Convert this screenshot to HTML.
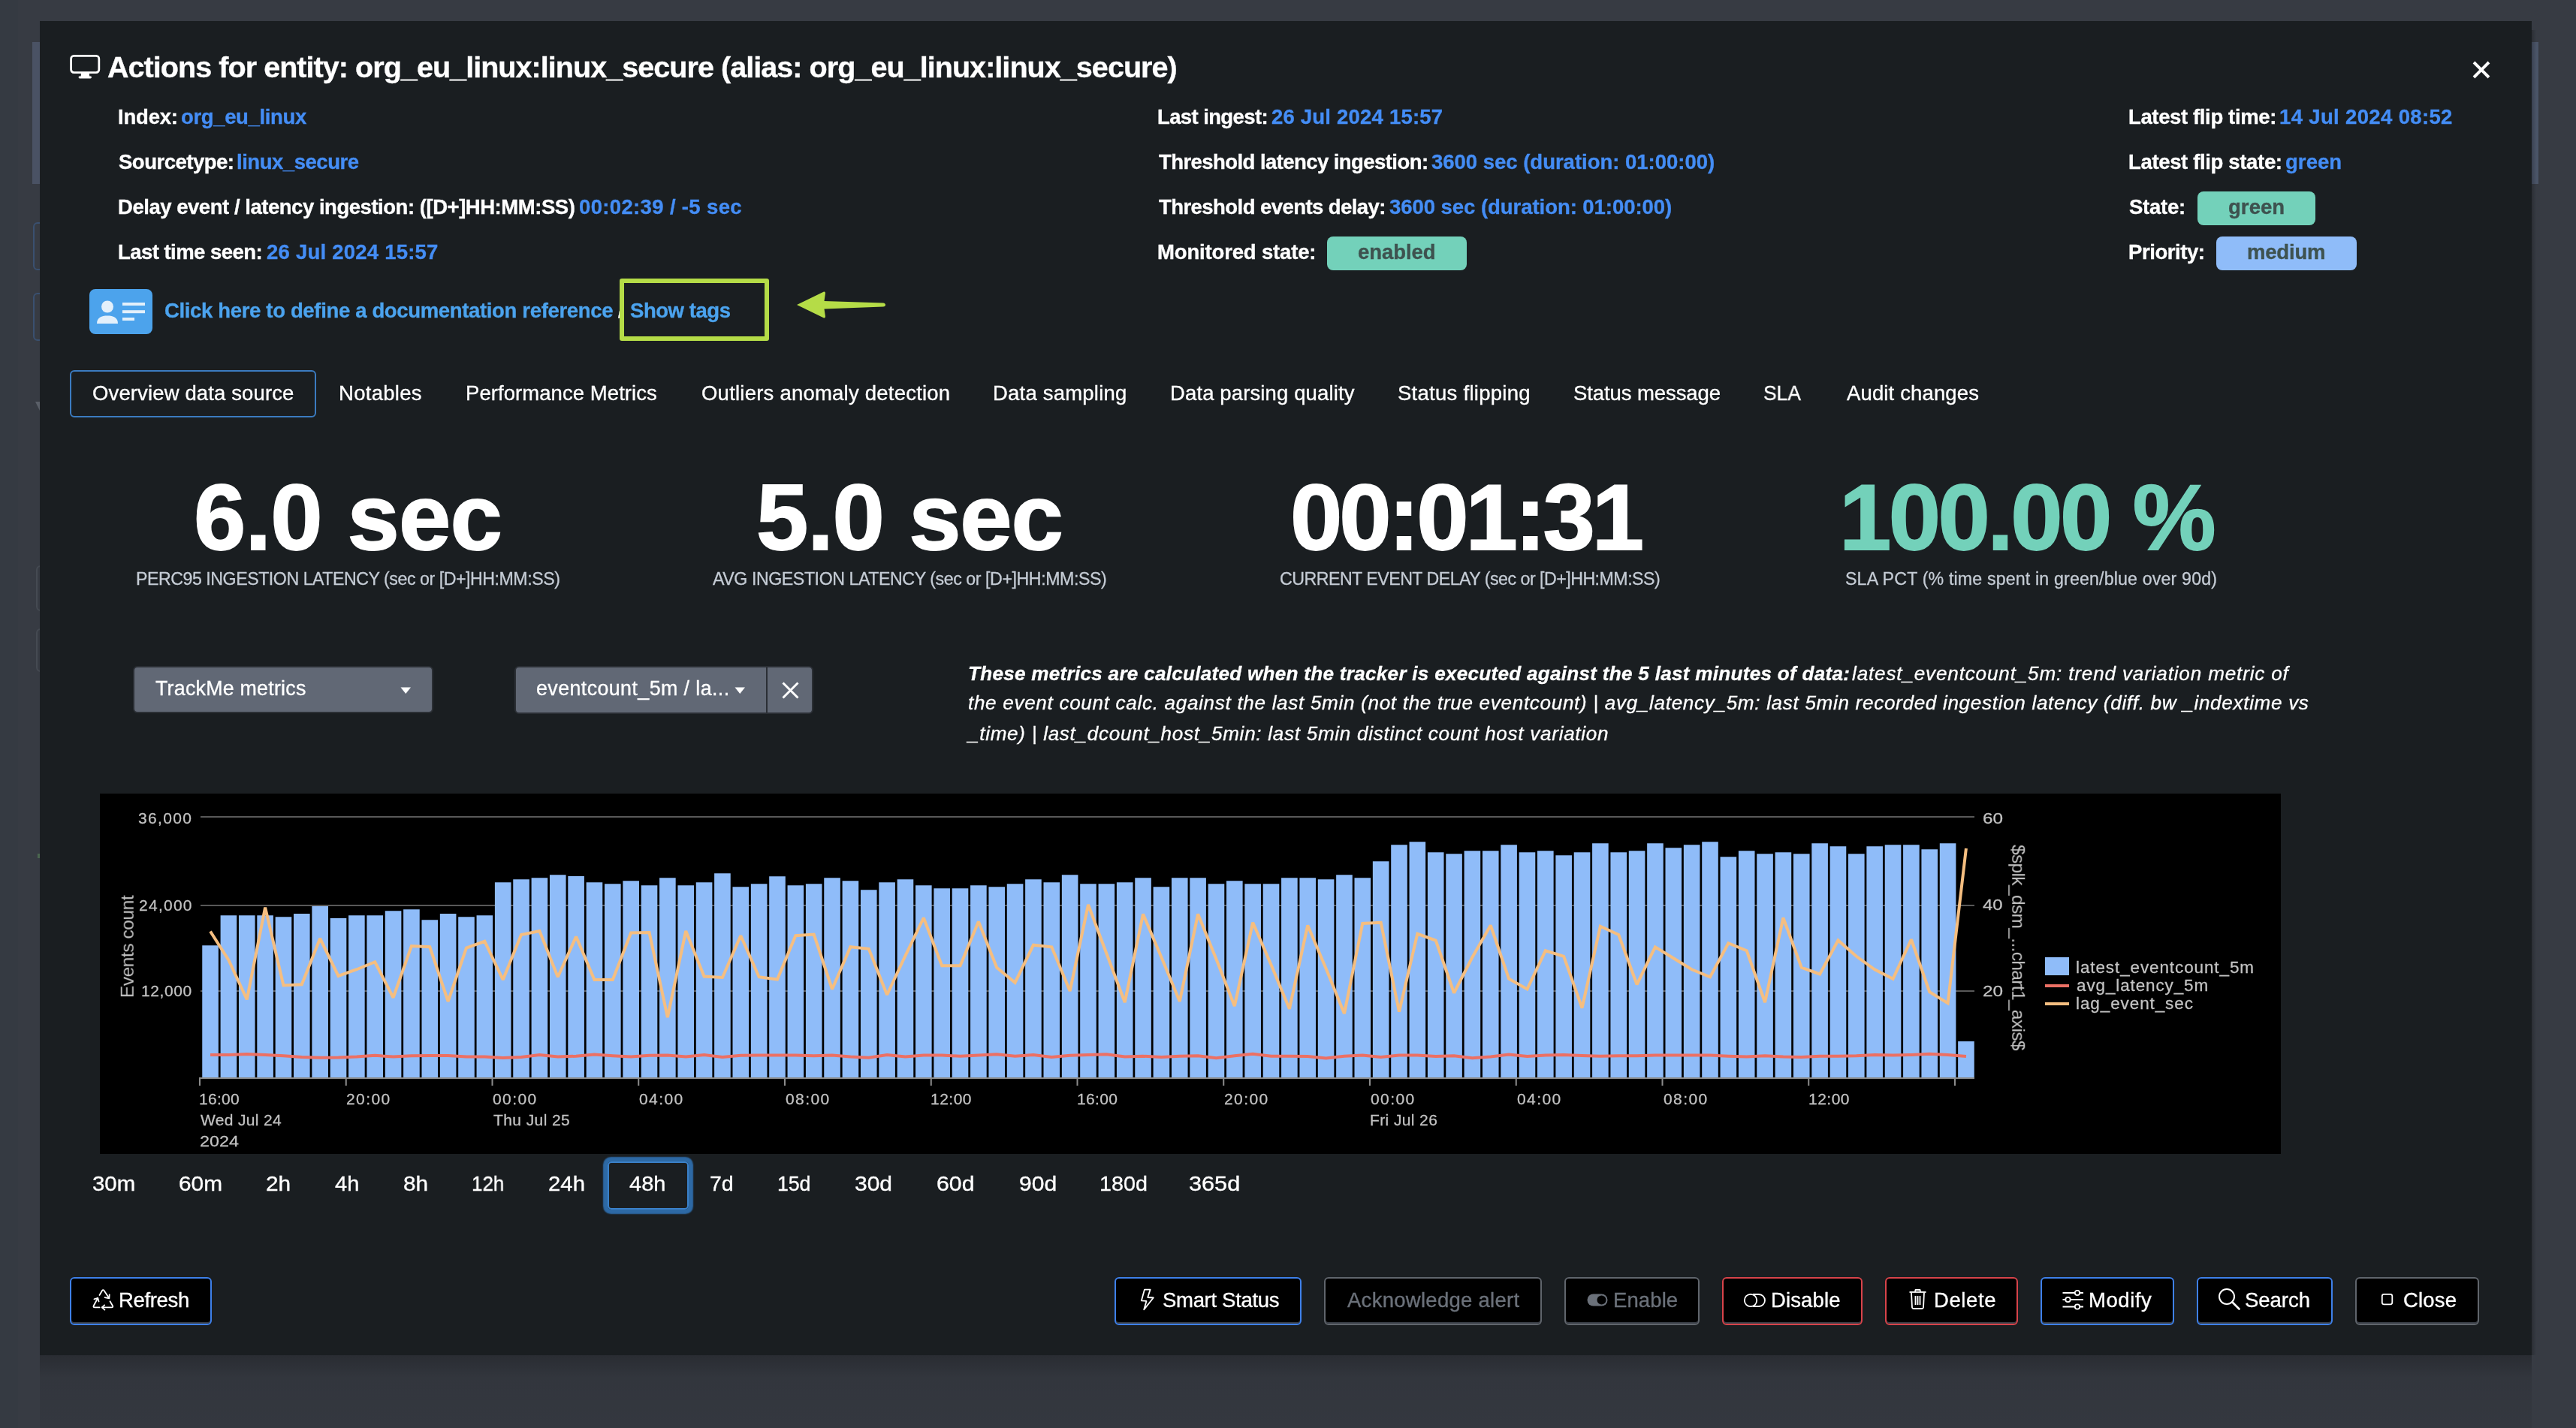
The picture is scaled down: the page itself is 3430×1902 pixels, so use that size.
<!DOCTYPE html><html><head><meta charset="utf-8"><title>TrackMe entity actions</title><style>
html,body{margin:0;padding:0;}body{width:3430px;height:1902px;overflow:hidden;position:relative;background:#373b43;font-family:"Liberation Sans",sans-serif;}
.t{position:absolute;white-space:nowrap;font-family:"Liberation Sans",sans-serif;will-change:transform;}
svg{position:absolute;overflow:visible}
</style></head><body>
<div style="position:absolute;left:0px;top:0px;width:24px;height:1902px;background:#353a42"></div>
<div style="position:absolute;left:43px;top:56px;width:10px;height:189px;background:#4a5264"></div>
<div style="position:absolute;left:44px;top:296px;width:16px;height:64px;border:2px solid #3a5070;border-radius:6px;box-sizing:border-box"></div>
<div style="position:absolute;left:44px;top:390px;width:16px;height:64px;border:2px solid #3a5070;border-radius:6px;box-sizing:border-box"></div>
<div style="position:absolute;left:48px;top:753px;width:12px;height:61px;border:2px solid #454a52;border-radius:6px;box-sizing:border-box"></div>
<div style="position:absolute;left:48px;top:837px;width:12px;height:58px;border:2px solid #454a52;border-radius:6px;box-sizing:border-box"></div>
<div style="position:absolute;left:50px;top:1137px;width:3px;height:6px;background:#4b6650"></div>
<svg style="left:47px;top:535px" width="7" height="14" viewBox="0 0 7 14"><path d="M0 0 L7 0 L7 14 Z" fill="#5a5f68"/></svg>
<div style="position:absolute;left:3371px;top:56px;width:9px;height:189px;background:#4a5467"></div>
<div style="position:absolute;left:53px;top:1805px;width:3318px;height:97px;background:linear-gradient(rgba(0,0,0,0.25),rgba(0,0,0,0.09) 30px,rgba(0,0,0,0.06) 97px)"></div>
<div style="position:absolute;left:3371px;top:40px;width:6px;height:1765px;background:linear-gradient(90deg,rgba(0,0,0,0.22),rgba(0,0,0,0))"></div>
<div style="position:absolute;left:53px;top:28px;width:3318px;height:1777px;background:#1a1e21"></div>
<svg style="left:93px;top:73px" width="42" height="33" viewBox="0 0 42 33"><rect x="1.6" y="1.4" width="37.2" height="22.2" rx="3.8" ry="3.8" fill="none" stroke="#fff" stroke-width="2.8"/><path d="M15 24.5 L25.8 24.5 L26.2 29 L14.6 29 Z" fill="#fff"/><rect x="11.6" y="28.6" width="17.3" height="2.8" rx="1.4" fill="#fff"/></svg>
<svg style="left:3291px;top:79.5px" width="26" height="26" viewBox="0 0 26 26"><path d="M3 3 L23 23 M23 3 L3 23" stroke="#fff" stroke-width="3.9" stroke-linecap="butt"/></svg>
<div style="position:absolute;left:1767px;top:315px;width:186px;height:45px;background:#73d1ba;border-radius:8px"></div>
<div style="position:absolute;left:2926px;top:255px;width:157px;height:45px;background:#73d1ba;border-radius:8px"></div>
<div style="position:absolute;left:2951px;top:315px;width:187px;height:45px;background:#8fbcf9;border-radius:8px"></div>
<svg style="left:119px;top:384px" width="84" height="61" viewBox="0 0 84 61"><rect x="0" y="1" width="84" height="60" rx="8" fill="#4ca3ec"/><circle cx="24" cy="24.5" r="8" fill="#e3f0fb"/><path d="M10 47 C10 39 16 36.5 24 36.5 C32 36.5 38 39 38 47 Z" fill="#e3f0fb"/><rect x="44" y="19" width="30" height="4" fill="#e3f0fb"/><rect x="44" y="29.2" width="30" height="4" fill="#e3f0fb"/><rect x="44" y="39" width="16" height="4" fill="#e3f0fb"/></svg>
<div style="position:absolute;left:93px;top:493px;width:328px;height:63px;border:2px solid #3b7bc0;border-radius:6px;box-sizing:border-box"></div>
<div style="position:absolute;left:177px;top:887px;width:400px;height:63px;background:#616875;border:2px solid #2b2f35;border-radius:6px;box-sizing:border-box"></div>
<svg style="left:533px;top:915px" width="15" height="10" viewBox="0 0 15 10"><path d="M0.5 0.5 L14 0.5 L7.25 9 Z" fill="#fff"/></svg>
<div style="position:absolute;left:685px;top:887px;width:398px;height:64px;background:#616875;border:2px solid #2b2f35;border-radius:6px;box-sizing:border-box"></div>
<div style="position:absolute;left:1019.5px;top:889px;width:2.5px;height:60px;background:#2b2f35"></div>
<svg style="left:978px;top:915px" width="15" height="10" viewBox="0 0 15 10"><path d="M0.5 0.5 L14 0.5 L7.25 9 Z" fill="#fff"/></svg>
<svg style="left:1040px;top:907px" width="25" height="25" viewBox="0 0 25 25"><path d="M2.5 2.5 L22.5 22.5 M22.5 2.5 L2.5 22.5" stroke="#fff" stroke-width="3"/></svg>
<div style="position:absolute;left:133px;top:1057px;width:2904px;height:480px;background:#000"></div>
<svg style="left:0;top:0" width="3430" height="1902" viewBox="0 0 3430 1902"><rect x="267" y="1087" width="2362" height="2" fill="#585858"/><rect x="267" y="1205" width="2362" height="2" fill="#585858"/><rect x="267" y="1319" width="2362" height="2" fill="#585858"/><rect x="269.25" y="1259.25" width="21.6" height="175.75" fill="#8fbcf9"/><rect x="293.60" y="1219.25" width="21.6" height="215.75" fill="#8fbcf9"/><rect x="317.96" y="1219.25" width="21.6" height="215.75" fill="#8fbcf9"/><rect x="342.31" y="1219.25" width="21.6" height="215.75" fill="#8fbcf9"/><rect x="366.66" y="1221.25" width="21.6" height="213.75" fill="#8fbcf9"/><rect x="391.01" y="1217.00" width="21.6" height="218.00" fill="#8fbcf9"/><rect x="415.37" y="1207.00" width="21.6" height="228.00" fill="#8fbcf9"/><rect x="439.72" y="1223.00" width="21.6" height="212.00" fill="#8fbcf9"/><rect x="464.07" y="1219.25" width="21.6" height="215.75" fill="#8fbcf9"/><rect x="488.43" y="1219.25" width="21.6" height="215.75" fill="#8fbcf9"/><rect x="512.78" y="1213.25" width="21.6" height="221.75" fill="#8fbcf9"/><rect x="537.13" y="1211.25" width="21.6" height="223.75" fill="#8fbcf9"/><rect x="561.49" y="1225.25" width="21.6" height="209.75" fill="#8fbcf9"/><rect x="585.84" y="1217.00" width="21.6" height="218.00" fill="#8fbcf9"/><rect x="610.19" y="1221.25" width="21.6" height="213.75" fill="#8fbcf9"/><rect x="634.55" y="1219.25" width="21.6" height="215.75" fill="#8fbcf9"/><rect x="658.90" y="1175.25" width="21.6" height="259.75" fill="#8fbcf9"/><rect x="683.25" y="1171.25" width="21.6" height="263.75" fill="#8fbcf9"/><rect x="707.60" y="1169.25" width="21.6" height="265.75" fill="#8fbcf9"/><rect x="731.96" y="1165.25" width="21.6" height="269.75" fill="#8fbcf9"/><rect x="756.31" y="1167.00" width="21.6" height="268.00" fill="#8fbcf9"/><rect x="780.66" y="1175.25" width="21.6" height="259.75" fill="#8fbcf9"/><rect x="805.02" y="1177.25" width="21.6" height="257.75" fill="#8fbcf9"/><rect x="829.37" y="1173.25" width="21.6" height="261.75" fill="#8fbcf9"/><rect x="853.72" y="1179.25" width="21.6" height="255.75" fill="#8fbcf9"/><rect x="878.08" y="1169.25" width="21.6" height="265.75" fill="#8fbcf9"/><rect x="902.43" y="1179.25" width="21.6" height="255.75" fill="#8fbcf9"/><rect x="926.78" y="1175.25" width="21.6" height="259.75" fill="#8fbcf9"/><rect x="951.13" y="1163.25" width="21.6" height="271.75" fill="#8fbcf9"/><rect x="975.49" y="1181.25" width="21.6" height="253.75" fill="#8fbcf9"/><rect x="999.84" y="1177.25" width="21.6" height="257.75" fill="#8fbcf9"/><rect x="1024.19" y="1167.25" width="21.6" height="267.75" fill="#8fbcf9"/><rect x="1048.55" y="1179.25" width="21.6" height="255.75" fill="#8fbcf9"/><rect x="1072.90" y="1177.25" width="21.6" height="257.75" fill="#8fbcf9"/><rect x="1097.25" y="1169.25" width="21.6" height="265.75" fill="#8fbcf9"/><rect x="1121.61" y="1173.25" width="21.6" height="261.75" fill="#8fbcf9"/><rect x="1145.96" y="1185.25" width="21.6" height="249.75" fill="#8fbcf9"/><rect x="1170.31" y="1175.25" width="21.6" height="259.75" fill="#8fbcf9"/><rect x="1194.66" y="1171.25" width="21.6" height="263.75" fill="#8fbcf9"/><rect x="1219.02" y="1179.25" width="21.6" height="255.75" fill="#8fbcf9"/><rect x="1243.37" y="1183.25" width="21.6" height="251.75" fill="#8fbcf9"/><rect x="1267.72" y="1183.25" width="21.6" height="251.75" fill="#8fbcf9"/><rect x="1292.08" y="1179.25" width="21.6" height="255.75" fill="#8fbcf9"/><rect x="1316.43" y="1181.25" width="21.6" height="253.75" fill="#8fbcf9"/><rect x="1340.78" y="1177.25" width="21.6" height="257.75" fill="#8fbcf9"/><rect x="1365.13" y="1171.25" width="21.6" height="263.75" fill="#8fbcf9"/><rect x="1389.49" y="1175.25" width="21.6" height="259.75" fill="#8fbcf9"/><rect x="1413.84" y="1165.25" width="21.6" height="269.75" fill="#8fbcf9"/><rect x="1438.19" y="1177.25" width="21.6" height="257.75" fill="#8fbcf9"/><rect x="1462.55" y="1177.25" width="21.6" height="257.75" fill="#8fbcf9"/><rect x="1486.90" y="1175.25" width="21.6" height="259.75" fill="#8fbcf9"/><rect x="1511.25" y="1169.25" width="21.6" height="265.75" fill="#8fbcf9"/><rect x="1535.61" y="1181.25" width="21.6" height="253.75" fill="#8fbcf9"/><rect x="1559.96" y="1169.25" width="21.6" height="265.75" fill="#8fbcf9"/><rect x="1584.31" y="1169.25" width="21.6" height="265.75" fill="#8fbcf9"/><rect x="1608.67" y="1177.25" width="21.6" height="257.75" fill="#8fbcf9"/><rect x="1633.02" y="1173.25" width="21.6" height="261.75" fill="#8fbcf9"/><rect x="1657.37" y="1177.25" width="21.6" height="257.75" fill="#8fbcf9"/><rect x="1681.72" y="1177.25" width="21.6" height="257.75" fill="#8fbcf9"/><rect x="1706.08" y="1169.25" width="21.6" height="265.75" fill="#8fbcf9"/><rect x="1730.43" y="1169.25" width="21.6" height="265.75" fill="#8fbcf9"/><rect x="1754.78" y="1171.25" width="21.6" height="263.75" fill="#8fbcf9"/><rect x="1779.14" y="1165.25" width="21.6" height="269.75" fill="#8fbcf9"/><rect x="1803.49" y="1169.25" width="21.6" height="265.75" fill="#8fbcf9"/><rect x="1827.84" y="1147.25" width="21.6" height="287.75" fill="#8fbcf9"/><rect x="1852.20" y="1125.25" width="21.6" height="309.75" fill="#8fbcf9"/><rect x="1876.55" y="1121.25" width="21.6" height="313.75" fill="#8fbcf9"/><rect x="1900.90" y="1135.25" width="21.6" height="299.75" fill="#8fbcf9"/><rect x="1925.25" y="1137.25" width="21.6" height="297.75" fill="#8fbcf9"/><rect x="1949.61" y="1133.25" width="21.6" height="301.75" fill="#8fbcf9"/><rect x="1973.96" y="1133.25" width="21.6" height="301.75" fill="#8fbcf9"/><rect x="1998.31" y="1125.25" width="21.6" height="309.75" fill="#8fbcf9"/><rect x="2022.67" y="1135.25" width="21.6" height="299.75" fill="#8fbcf9"/><rect x="2047.02" y="1133.25" width="21.6" height="301.75" fill="#8fbcf9"/><rect x="2071.37" y="1139.25" width="21.6" height="295.75" fill="#8fbcf9"/><rect x="2095.73" y="1135.25" width="21.6" height="299.75" fill="#8fbcf9"/><rect x="2120.08" y="1123.25" width="21.6" height="311.75" fill="#8fbcf9"/><rect x="2144.43" y="1135.25" width="21.6" height="299.75" fill="#8fbcf9"/><rect x="2168.78" y="1133.25" width="21.6" height="301.75" fill="#8fbcf9"/><rect x="2193.14" y="1123.25" width="21.6" height="311.75" fill="#8fbcf9"/><rect x="2217.49" y="1129.25" width="21.6" height="305.75" fill="#8fbcf9"/><rect x="2241.84" y="1125.25" width="21.6" height="309.75" fill="#8fbcf9"/><rect x="2266.20" y="1121.25" width="21.6" height="313.75" fill="#8fbcf9"/><rect x="2290.55" y="1141.25" width="21.6" height="293.75" fill="#8fbcf9"/><rect x="2314.90" y="1133.25" width="21.6" height="301.75" fill="#8fbcf9"/><rect x="2339.26" y="1137.25" width="21.6" height="297.75" fill="#8fbcf9"/><rect x="2363.61" y="1135.25" width="21.6" height="299.75" fill="#8fbcf9"/><rect x="2387.96" y="1137.25" width="21.6" height="297.75" fill="#8fbcf9"/><rect x="2412.31" y="1123.25" width="21.6" height="311.75" fill="#8fbcf9"/><rect x="2436.67" y="1127.25" width="21.6" height="307.75" fill="#8fbcf9"/><rect x="2461.02" y="1137.25" width="21.6" height="297.75" fill="#8fbcf9"/><rect x="2485.37" y="1127.25" width="21.6" height="307.75" fill="#8fbcf9"/><rect x="2509.73" y="1125.25" width="21.6" height="309.75" fill="#8fbcf9"/><rect x="2534.08" y="1125.25" width="21.6" height="309.75" fill="#8fbcf9"/><rect x="2558.43" y="1131.25" width="21.6" height="303.75" fill="#8fbcf9"/><rect x="2582.79" y="1123.25" width="21.6" height="311.75" fill="#8fbcf9"/><rect x="2607.14" y="1387.00" width="21.6" height="48.00" fill="#8fbcf9"/><rect x="265" y="1435" width="2364" height="2" fill="#8c8c8c"/><rect x="265.00" y="1435" width="2" height="11" fill="#8c8c8c"/><rect x="459.75" y="1435" width="2" height="11" fill="#8c8c8c"/><rect x="654.50" y="1435" width="2" height="11" fill="#8c8c8c"/><rect x="849.25" y="1435" width="2" height="11" fill="#8c8c8c"/><rect x="1044.00" y="1435" width="2" height="11" fill="#8c8c8c"/><rect x="1238.75" y="1435" width="2" height="11" fill="#8c8c8c"/><rect x="1433.50" y="1435" width="2" height="11" fill="#8c8c8c"/><rect x="1628.25" y="1435" width="2" height="11" fill="#8c8c8c"/><rect x="1823.00" y="1435" width="2" height="11" fill="#8c8c8c"/><rect x="2017.75" y="1435" width="2" height="11" fill="#8c8c8c"/><rect x="2212.50" y="1435" width="2" height="11" fill="#8c8c8c"/><rect x="2407.25" y="1435" width="2" height="11" fill="#8c8c8c"/><rect x="2602.00" y="1435" width="2" height="11" fill="#8c8c8c"/><polyline points="280.05,1405.00 304.40,1405.00 328.76,1404.00 353.11,1405.00 377.46,1406.25 401.81,1408.00 426.17,1408.75 450.52,1408.50 474.87,1407.50 499.23,1405.75 523.58,1407.50 547.93,1406.25 572.29,1406.00 596.64,1406.00 620.99,1407.50 645.35,1407.50 669.70,1409.00 694.05,1408.00 718.40,1405.00 742.76,1407.50 767.11,1406.75 791.46,1404.50 815.82,1406.25 840.17,1407.50 864.52,1405.75 888.88,1405.50 913.23,1407.50 937.58,1405.00 961.93,1408.00 986.29,1405.75 1010.64,1405.50 1034.99,1405.50 1059.35,1405.50 1083.70,1406.25 1108.05,1405.50 1132.40,1407.50 1156.76,1408.75 1181.11,1405.00 1205.46,1407.50 1229.82,1405.50 1254.17,1405.50 1278.52,1406.75 1302.88,1405.50 1327.23,1404.25 1351.58,1406.75 1375.93,1405.00 1400.29,1408.00 1424.64,1405.75 1448.99,1405.00 1473.35,1404.25 1497.70,1407.50 1522.05,1406.75 1546.41,1408.00 1570.76,1406.75 1595.11,1406.25 1619.47,1409.25 1643.82,1406.25 1668.17,1403.75 1692.52,1406.75 1716.88,1406.75 1741.23,1407.00 1765.58,1409.50 1789.94,1406.75 1814.29,1405.50 1838.64,1408.00 1863.00,1405.50 1887.35,1405.50 1911.70,1407.00 1936.05,1406.25 1960.41,1409.25 1984.76,1407.50 2009.11,1404.50 2033.47,1407.00 2057.82,1405.50 2082.17,1405.00 2106.53,1406.00 2130.88,1406.75 2155.23,1406.25 2179.58,1406.25 2203.94,1405.50 2228.29,1405.50 2252.64,1405.50 2277.00,1405.50 2301.35,1406.75 2325.70,1407.50 2350.06,1406.25 2374.41,1407.50 2398.76,1408.00 2423.11,1406.75 2447.47,1406.75 2471.82,1406.25 2496.17,1405.00 2520.53,1405.50 2544.88,1405.00 2569.23,1403.75 2593.59,1405.00 2617.94,1407.00" fill="none" stroke="#ec7064" stroke-width="4" stroke-linejoin="miter" stroke-miterlimit="2"/><polyline points="280.05,1240.50 304.40,1278.75 328.76,1331.25 353.11,1208.75 377.46,1312.50 401.81,1311.25 426.17,1250.00 450.52,1300.00 474.87,1291.25 499.23,1281.25 523.58,1328.75 547.93,1260.00 572.29,1261.25 596.64,1333.75 620.99,1262.50 645.35,1253.75 669.70,1305.00 694.05,1245.00 718.40,1240.00 742.76,1301.25 767.11,1247.50 791.46,1305.00 815.82,1305.00 840.17,1242.50 864.52,1242.00 888.88,1355.00 913.23,1240.00 937.58,1300.50 961.93,1302.00 986.29,1246.25 1010.64,1301.25 1034.99,1304.50 1059.35,1246.25 1083.70,1244.50 1108.05,1317.50 1132.40,1261.25 1156.76,1263.75 1181.11,1325.00 1205.46,1273.00 1229.82,1222.50 1254.17,1286.25 1278.52,1286.25 1302.88,1227.50 1327.23,1288.75 1351.58,1308.75 1375.93,1258.75 1400.29,1261.25 1424.64,1320.00 1448.99,1205.00 1473.35,1270.00 1497.70,1335.00 1522.05,1217.50 1546.41,1275.00 1570.76,1333.75 1595.11,1217.50 1619.47,1277.50 1643.82,1340.00 1668.17,1228.75 1692.52,1285.00 1716.88,1343.75 1741.23,1232.50 1765.58,1290.00 1789.94,1350.00 1814.29,1230.00 1838.64,1228.75 1863.00,1347.50 1887.35,1243.75 1911.70,1252.50 1936.05,1322.50 1960.41,1275.00 1984.76,1232.50 2009.11,1303.75 2033.47,1317.50 2057.82,1266.25 2082.17,1273.75 2106.53,1342.50 2130.88,1233.75 2155.23,1245.00 2179.58,1311.25 2203.94,1261.25 2228.29,1276.25 2252.64,1291.25 2277.00,1301.25 2301.35,1256.25 2325.70,1266.25 2350.06,1335.00 2374.41,1222.50 2398.76,1288.75 2423.11,1297.50 2447.47,1252.50 2471.82,1273.75 2496.17,1291.25 2520.53,1303.75 2544.88,1251.25 2569.23,1321.25 2593.59,1336.25 2617.94,1130.00" fill="none" stroke="#f5be80" stroke-width="4" stroke-linejoin="miter" stroke-miterlimit="2"/><rect x="2723" y="1275" width="32" height="24" fill="#8fbcf9"/><rect x="2723" y="1311" width="32" height="4" fill="#ec7064"/><rect x="2723" y="1335" width="32" height="4" fill="#f5be80"/></svg>
<div style="position:absolute;left:809px;top:1547px;width:107.5px;height:64px;border:2px solid #3a80c8;border-radius:5px;box-sizing:border-box;box-shadow:0 0 1.5px 5.5px #2d69a5"></div>
<div style="position:absolute;left:93px;top:1701px;width:189px;height:64px;background:#000;border:2px solid #3e80ea;border-radius:6px;box-sizing:border-box;box-shadow:inset 0 -2px 0 #3a3f47"></div>
<div style="position:absolute;left:1484px;top:1701px;width:249px;height:64px;background:#000;border:2px solid #3e80ea;border-radius:6px;box-sizing:border-box;box-shadow:inset 0 -2px 0 #3a3f47"></div>
<div style="position:absolute;left:1763px;top:1701px;width:290px;height:64px;background:#000;border:2px solid #60656c;border-radius:6px;box-sizing:border-box;box-shadow:inset 0 -2px 0 #3a3f47"></div>
<div style="position:absolute;left:2083px;top:1701px;width:180px;height:64px;background:#000;border:2px solid #60656c;border-radius:6px;box-sizing:border-box;box-shadow:inset 0 -2px 0 #3a3f47"></div>
<div style="position:absolute;left:2293px;top:1701px;width:187px;height:64px;background:#000;border:2px solid #d8434a;border-radius:6px;box-sizing:border-box;box-shadow:inset 0 -2px 0 #3a3f47"></div>
<div style="position:absolute;left:2510px;top:1701px;width:177px;height:64px;background:#000;border:2px solid #d8434a;border-radius:6px;box-sizing:border-box;box-shadow:inset 0 -2px 0 #3a3f47"></div>
<div style="position:absolute;left:2717px;top:1701px;width:178px;height:64px;background:#000;border:2px solid #3e80ea;border-radius:6px;box-sizing:border-box;box-shadow:inset 0 -2px 0 #3a3f47"></div>
<div style="position:absolute;left:2925px;top:1701px;width:181px;height:64px;background:#000;border:2px solid #3e80ea;border-radius:6px;box-sizing:border-box;box-shadow:inset 0 -2px 0 #3a3f47"></div>
<div style="position:absolute;left:3136px;top:1701px;width:165px;height:64px;background:#000;border:2px solid #60656c;border-radius:6px;box-sizing:border-box;box-shadow:inset 0 -2px 0 #3a3f47"></div>
<svg style="left:122px;top:1716px" width="32" height="32" viewBox="0 0 32 32" fill="none" stroke="#fff" stroke-width="1.8" stroke-linecap="round" stroke-linejoin="round"><path d="M10.5 9 L14 3 Q15.3 1.2 16.6 3 L23.2 13.1"/><path d="M17.6 12.1 L23.4 13.3 L23.7 8.3"/><path d="M10.6 25.4 L4.2 25.4 Q1.6 25.4 2.8 23 L8.2 13"/><path d="M3.4 14.3 L8.3 12.9 L9.5 17.5"/><path d="M24.5 17.2 L28 23.3 Q29 25.4 26.6 25.4 L13.9 25.4"/><path d="M17.1 22.3 L13.7 25.4 L17.4 28.6"/></svg>
<svg style="left:1517px;top:1716px" width="22" height="31" viewBox="0 0 22 31" fill="none" stroke="#fff" stroke-width="1.8" stroke-linejoin="round"><path d="M7 1.6 L14.6 1.6 L11.2 12 L18.8 12.5 L6.2 28.3 L9.5 17 L2.8 16.4 Z"/></svg>
<svg style="left:2112px;top:1722px" width="31" height="20" viewBox="0 0 31 20"><rect x="1.5" y="1.5" width="27" height="16" rx="8" fill="#6b717a"/><circle cx="20.5" cy="9.5" r="6" fill="#000"/></svg>
<svg style="left:2321px;top:1721px" width="31" height="22" viewBox="0 0 31 22" fill="none" stroke="#fff" stroke-width="1.8"><circle cx="10" cy="11" r="8.2"/><path d="M13 3 L21 3 A8 8 0 0 1 21 19 L13 19"/></svg>
<svg style="left:2541px;top:1716px" width="25" height="29" viewBox="0 0 25 29" fill="none" stroke="#fff" stroke-width="1.8" stroke-linejoin="round"><path d="M1.5 5 L23.5 5"/><path d="M9 4.5 L9.5 2 L15.5 2 L16 4.5"/><path d="M4 5.5 L5 25.5 Q5.2 27 7 27 L18 27 Q19.8 27 20 25.5 L21 5.5"/><path d="M9.5 10 L9.5 22 M12.5 10 L12.5 22 M15.5 10 L15.5 22"/></svg>
<svg style="left:2745px;top:1717px" width="31" height="30" viewBox="0 0 31 30" fill="none" stroke="#fff" stroke-width="1.8"><path d="M1.5 5 L29 5 M1.5 14 L29 14 M1.5 23.5 L29 23.5"/><circle cx="21" cy="5" r="3.2" fill="#000"/><circle cx="8.5" cy="14" r="3.2" fill="#000"/><circle cx="21" cy="23.5" r="3.2" fill="#000"/></svg>
<svg style="left:2953px;top:1715px" width="31" height="31" viewBox="0 0 31 31" fill="none" stroke="#fff" stroke-width="2"><circle cx="12" cy="12" r="10"/><path d="M19.5 19.5 L28.5 28.5" stroke-linecap="round" stroke-width="2.6"/></svg>
<svg style="left:3170px;top:1722px" width="18" height="18" viewBox="0 0 18 18" fill="none" stroke="#fff" stroke-width="1.8"><rect x="1.8" y="1.8" width="13.5" height="13.5" rx="2.5"/></svg>
<div class="t" style="left:142.75px;top:70.25px;font-size:39.565px;line-height:39.565px;font-weight:700;font-style:normal;color:#ffffff;letter-spacing:-0.965px;-webkit-text-stroke:0.35px #ffffff">Actions for entity: org_eu_linux:linux_secure (alias: org_eu_linux:linux_secure)</div>
<div class="t" style="left:156.75px;top:142.19px;font-size:27.536px;line-height:27.536px;font-weight:700;font-style:normal;color:#ffffff;letter-spacing:-0.200px;-webkit-text-stroke:0.35px #ffffff">Index:</div>
<div class="t" style="left:241.00px;top:142.19px;font-size:27.536px;line-height:27.536px;font-weight:700;font-style:normal;color:#448df5;letter-spacing:-0.364px;-webkit-text-stroke:0.35px #448df5">org_eu_linux</div>
<div class="t" style="left:157.75px;top:202.19px;font-size:27.536px;line-height:27.536px;font-weight:700;font-style:normal;color:#ffffff;letter-spacing:-0.500px;-webkit-text-stroke:0.35px #ffffff">Sourcetype:</div>
<div class="t" style="left:315.00px;top:202.19px;font-size:27.536px;line-height:27.536px;font-weight:700;font-style:normal;color:#448df5;letter-spacing:-0.477px;-webkit-text-stroke:0.35px #448df5">linux_secure</div>
<div class="t" style="left:156.75px;top:262.19px;font-size:27.536px;line-height:27.536px;font-weight:700;font-style:normal;color:#ffffff;letter-spacing:-0.475px;-webkit-text-stroke:0.35px #ffffff">Delay event / latency ingestion: ([D+]HH:MM:SS)</div>
<div class="t" style="left:771.00px;top:262.19px;font-size:27.536px;line-height:27.536px;font-weight:700;font-style:normal;color:#448df5;letter-spacing:0.344px;-webkit-text-stroke:0.35px #448df5">00:02:39 / -5 sec</div>
<div class="t" style="left:156.75px;top:321.69px;font-size:27.536px;line-height:27.536px;font-weight:700;font-style:normal;color:#ffffff;letter-spacing:-0.554px;-webkit-text-stroke:0.35px #ffffff">Last time seen:</div>
<div class="t" style="left:354.50px;top:321.69px;font-size:27.536px;line-height:27.536px;font-weight:700;font-style:normal;color:#448df5;letter-spacing:0.219px;-webkit-text-stroke:0.35px #448df5">26 Jul 2024 15:57</div>
<div class="t" style="left:1540.50px;top:142.19px;font-size:27.536px;line-height:27.536px;font-weight:700;font-style:normal;color:#ffffff;letter-spacing:-0.618px;-webkit-text-stroke:0.35px #ffffff">Last ingest:</div>
<div class="t" style="left:1692.80px;top:142.19px;font-size:27.536px;line-height:27.536px;font-weight:700;font-style:normal;color:#448df5;letter-spacing:0.200px;-webkit-text-stroke:0.35px #448df5">26 Jul 2024 15:57</div>
<div class="t" style="left:1542.50px;top:202.19px;font-size:27.536px;line-height:27.536px;font-weight:700;font-style:normal;color:#ffffff;letter-spacing:-0.574px;-webkit-text-stroke:0.35px #ffffff">Threshold latency ingestion:</div>
<div class="t" style="left:1905.60px;top:202.19px;font-size:27.536px;line-height:27.536px;font-weight:700;font-style:normal;color:#448df5;letter-spacing:-0.021px;-webkit-text-stroke:0.35px #448df5">3600 sec (duration: 01:00:00)</div>
<div class="t" style="left:1542.50px;top:262.19px;font-size:27.536px;line-height:27.536px;font-weight:700;font-style:normal;color:#ffffff;letter-spacing:-0.568px;-webkit-text-stroke:0.35px #ffffff">Threshold events delay:</div>
<div class="t" style="left:1849.50px;top:262.19px;font-size:27.536px;line-height:27.536px;font-weight:700;font-style:normal;color:#448df5;letter-spacing:-0.054px;-webkit-text-stroke:0.35px #448df5">3600 sec (duration: 01:00:00)</div>
<div class="t" style="left:1540.50px;top:321.69px;font-size:27.536px;line-height:27.536px;font-weight:700;font-style:normal;color:#ffffff;letter-spacing:-0.167px;-webkit-text-stroke:0.35px #ffffff">Monitored state:</div>
<div class="t" style="left:1808.00px;top:321.69px;font-size:27.536px;line-height:27.536px;font-weight:700;font-style:normal;color:#3e524f;letter-spacing:-0.067px;-webkit-text-stroke:0.35px #3e524f">enabled</div>
<div class="t" style="left:2834.00px;top:142.19px;font-size:27.536px;line-height:27.536px;font-weight:700;font-style:normal;color:#ffffff;letter-spacing:-0.375px;-webkit-text-stroke:0.35px #ffffff">Latest flip time:</div>
<div class="t" style="left:3035.25px;top:142.19px;font-size:27.536px;line-height:27.536px;font-weight:700;font-style:normal;color:#448df5;letter-spacing:0.344px;-webkit-text-stroke:0.35px #448df5">14 Jul 2024 08:52</div>
<div class="t" style="left:2834.00px;top:202.19px;font-size:27.536px;line-height:27.536px;font-weight:700;font-style:normal;color:#ffffff;letter-spacing:-0.353px;-webkit-text-stroke:0.35px #ffffff">Latest flip state:</div>
<div class="t" style="left:3043.25px;top:202.19px;font-size:27.536px;line-height:27.536px;font-weight:700;font-style:normal;color:#448df5;letter-spacing:0.062px;-webkit-text-stroke:0.35px #448df5">green</div>
<div class="t" style="left:2835.00px;top:261.69px;font-size:27.536px;line-height:27.536px;font-weight:700;font-style:normal;color:#ffffff;letter-spacing:-0.250px;-webkit-text-stroke:0.35px #ffffff">State:</div>
<div class="t" style="left:2967.00px;top:261.69px;font-size:27.536px;line-height:27.536px;font-weight:700;font-style:normal;color:#3e524f;letter-spacing:0.062px;-webkit-text-stroke:0.35px #3e524f">green</div>
<div class="t" style="left:2834.00px;top:321.69px;font-size:27.536px;line-height:27.536px;font-weight:700;font-style:normal;color:#ffffff;letter-spacing:-0.438px;-webkit-text-stroke:0.35px #ffffff">Priority:</div>
<div class="t" style="left:2992.25px;top:321.69px;font-size:27.536px;line-height:27.536px;font-weight:700;font-style:normal;color:#3e524f;letter-spacing:-0.200px;-webkit-text-stroke:0.35px #3e524f">medium</div>
<div class="t" style="left:218.50px;top:399.69px;font-size:27.536px;line-height:27.536px;font-weight:700;font-style:normal;color:#4ba3ee;letter-spacing:-0.349px;-webkit-text-stroke:0.35px #4ba3ee">Click here to define a documentation reference</div>
<div class="t" style="left:823.00px;top:399.69px;font-size:27.536px;line-height:27.536px;font-weight:700;font-style:normal;color:#ffffff;letter-spacing:0.000px;-webkit-text-stroke:0.35px #ffffff">/</div>
<div class="t" style="left:838.60px;top:399.69px;font-size:27.536px;line-height:27.536px;font-weight:700;font-style:normal;color:#4ba3ee;letter-spacing:-0.450px;-webkit-text-stroke:0.35px #4ba3ee">Show tags</div>
<div class="t" style="left:123.25px;top:509.69px;font-size:27.536px;line-height:27.536px;font-weight:400;font-style:normal;color:#ffffff;letter-spacing:0.118px;-webkit-text-stroke:0.34px #ffffff">Overview data source</div>
<div class="t" style="left:450.50px;top:509.69px;font-size:27.536px;line-height:27.536px;font-weight:400;font-style:normal;color:#ffffff;letter-spacing:0.286px;-webkit-text-stroke:0.34px #ffffff">Notables</div>
<div class="t" style="left:620.00px;top:509.69px;font-size:27.536px;line-height:27.536px;font-weight:400;font-style:normal;color:#ffffff;letter-spacing:0.056px;-webkit-text-stroke:0.34px #ffffff">Performance Metrics</div>
<div class="t" style="left:934.00px;top:509.69px;font-size:27.536px;line-height:27.536px;font-weight:400;font-style:normal;color:#ffffff;letter-spacing:0.216px;-webkit-text-stroke:0.34px #ffffff">Outliers anomaly detection</div>
<div class="t" style="left:1322.00px;top:509.69px;font-size:27.536px;line-height:27.536px;font-weight:400;font-style:normal;color:#ffffff;letter-spacing:0.200px;-webkit-text-stroke:0.34px #ffffff">Data sampling</div>
<div class="t" style="left:1557.50px;top:509.69px;font-size:27.536px;line-height:27.536px;font-weight:400;font-style:normal;color:#ffffff;letter-spacing:0.116px;-webkit-text-stroke:0.34px #ffffff">Data parsing quality</div>
<div class="t" style="left:1861.30px;top:509.69px;font-size:27.536px;line-height:27.536px;font-weight:400;font-style:normal;color:#ffffff;letter-spacing:0.264px;-webkit-text-stroke:0.34px #ffffff">Status flipping</div>
<div class="t" style="left:2095.00px;top:509.69px;font-size:27.536px;line-height:27.536px;font-weight:400;font-style:normal;color:#ffffff;letter-spacing:-0.100px;-webkit-text-stroke:0.34px #ffffff">Status message</div>
<div class="t" style="left:2348.38px;top:509.69px;font-size:27.536px;line-height:27.536px;font-weight:400;font-style:normal;color:#ffffff;letter-spacing:0.000px;transform:scaleX(0.9580);transform-origin:0 0;-webkit-text-stroke:0.34px #ffffff">SLA</div>
<div class="t" style="left:2458.80px;top:509.69px;font-size:27.536px;line-height:27.536px;font-weight:400;font-style:normal;color:#ffffff;letter-spacing:0.133px;-webkit-text-stroke:0.34px #ffffff">Audit changes</div>
<div class="t" style="left:258.00px;top:626.97px;font-size:124.638px;line-height:124.638px;font-weight:700;font-style:normal;color:#ffffff;letter-spacing:-0.833px;-webkit-text-stroke:1.8px #ffffff">6.0 sec</div>
<div class="t" style="left:1007.00px;top:626.97px;font-size:124.638px;line-height:124.638px;font-weight:700;font-style:normal;color:#ffffff;letter-spacing:-1.167px;-webkit-text-stroke:1.8px #ffffff">5.0 sec</div>
<div class="t" style="left:1718.40px;top:626.97px;font-size:124.638px;line-height:124.638px;font-weight:700;font-style:normal;color:#ffffff;letter-spacing:-3.971px;-webkit-text-stroke:1.8px #ffffff">00:01:31</div>
<div class="t" style="left:2449.00px;top:626.97px;font-size:124.638px;line-height:124.638px;font-weight:700;font-style:normal;color:#73d1ba;letter-spacing:-3.571px;-webkit-text-stroke:1.8px #73d1ba">100.00 %</div>
<div class="t" style="left:180.80px;top:759.57px;font-size:23.188px;line-height:23.188px;font-weight:400;font-style:normal;color:#c5ccd5;letter-spacing:-0.462px;-webkit-text-stroke:0.29px #c5ccd5">PERC95 INGESTION LATENCY (sec or [D+]HH:MM:SS)</div>
<div class="t" style="left:948.80px;top:759.57px;font-size:23.188px;line-height:23.188px;font-weight:400;font-style:normal;color:#c5ccd5;letter-spacing:-0.429px;-webkit-text-stroke:0.29px #c5ccd5">AVG INGESTION LATENCY (sec or [D+]HH:MM:SS)</div>
<div class="t" style="left:1703.80px;top:759.57px;font-size:23.188px;line-height:23.188px;font-weight:400;font-style:normal;color:#c5ccd5;letter-spacing:-0.503px;-webkit-text-stroke:0.29px #c5ccd5">CURRENT EVENT DELAY (sec or [D+]HH:MM:SS)</div>
<div class="t" style="left:2456.80px;top:759.57px;font-size:23.188px;line-height:23.188px;font-weight:400;font-style:normal;color:#c5ccd5;letter-spacing:0.164px;-webkit-text-stroke:0.29px #c5ccd5">SLA PCT (% time spent in green/blue over 90d)</div>
<div class="t" style="left:207.40px;top:904.30px;font-size:26.812px;line-height:26.812px;font-weight:400;font-style:normal;color:#ffffff;letter-spacing:0.236px;-webkit-text-stroke:0.34px #ffffff">TrackMe metrics</div>
<div class="t" style="left:714.40px;top:904.30px;font-size:26.812px;line-height:26.812px;font-weight:400;font-style:normal;color:#ffffff;letter-spacing:0.420px;-webkit-text-stroke:0.34px #ffffff">eventcount_5m / la...</div>
<div class="t" style="left:1289.00px;top:883.91px;font-size:26.087px;line-height:26.087px;font-weight:700;font-style:italic;color:#ffffff;letter-spacing:0.283px;-webkit-text-stroke:0.35px #ffffff">These metrics are calculated when the tracker is executed against the 5 last minutes of data:</div>
<div class="t" style="left:2466.00px;top:883.91px;font-size:26.087px;line-height:26.087px;font-weight:400;font-style:italic;color:#ffffff;letter-spacing:0.842px;-webkit-text-stroke:0.33px #ffffff">latest_eventcount_5m: trend variation metric of</div>
<div class="t" style="left:1288.50px;top:923.41px;font-size:26.087px;line-height:26.087px;font-weight:400;font-style:italic;color:#ffffff;letter-spacing:0.687px;-webkit-text-stroke:0.33px #ffffff">the event count calc. against the last 5min (not the true eventcount) | avg_latency_5m: last 5min recorded ingestion latency (diff. bw _indextime vs</div>
<div class="t" style="left:1289.00px;top:963.91px;font-size:26.087px;line-height:26.087px;font-weight:400;font-style:italic;color:#ffffff;letter-spacing:0.714px;-webkit-text-stroke:0.33px #ffffff">_time) | last_dcount_host_5min: last 5min distinct count host variation</div>
<div class="t" style="left:122.65px;top:1564.30px;font-size:26.812px;line-height:26.812px;font-weight:400;font-style:normal;color:#ffffff;letter-spacing:0.000px;transform:scaleX(1.0969);transform-origin:0 0;-webkit-text-stroke:0.34px #ffffff">30m</div>
<div class="t" style="left:238.14px;top:1564.30px;font-size:26.812px;line-height:26.812px;font-weight:400;font-style:normal;color:#ffffff;letter-spacing:0.000px;transform:scaleX(1.1122);transform-origin:0 0;-webkit-text-stroke:0.34px #ffffff">60m</div>
<div class="t" style="left:354.39px;top:1564.30px;font-size:26.812px;line-height:26.812px;font-weight:400;font-style:normal;color:#ffffff;letter-spacing:0.000px;transform:scaleX(1.1111);transform-origin:0 0;-webkit-text-stroke:0.34px #ffffff">2h</div>
<div class="t" style="left:445.92px;top:1564.30px;font-size:26.812px;line-height:26.812px;font-weight:400;font-style:normal;color:#ffffff;letter-spacing:0.000px;transform:scaleX(1.0833);transform-origin:0 0;-webkit-text-stroke:0.34px #ffffff">4h</div>
<div class="t" style="left:537.14px;top:1564.30px;font-size:26.812px;line-height:26.812px;font-weight:400;font-style:normal;color:#ffffff;letter-spacing:0.000px;transform:scaleX(1.1111);transform-origin:0 0;-webkit-text-stroke:0.34px #ffffff">8h</div>
<div class="t" style="left:627.56px;top:1564.30px;font-size:26.812px;line-height:26.812px;font-weight:400;font-style:normal;color:#ffffff;letter-spacing:0.000px;transform:scaleX(0.9695);transform-origin:0 0;-webkit-text-stroke:0.34px #ffffff">12h</div>
<div class="t" style="left:730.15px;top:1564.30px;font-size:26.812px;line-height:26.812px;font-weight:400;font-style:normal;color:#ffffff;letter-spacing:-0.000px;transform:scaleX(1.0952);transform-origin:0 0;-webkit-text-stroke:0.34px #ffffff">24h</div>
<div class="t" style="left:837.92px;top:1564.30px;font-size:26.812px;line-height:26.812px;font-weight:400;font-style:normal;color:#ffffff;letter-spacing:0.000px;transform:scaleX(1.0833);transform-origin:0 0;-webkit-text-stroke:0.34px #ffffff">48h</div>
<div class="t" style="left:945.44px;top:1564.30px;font-size:26.812px;line-height:26.812px;font-weight:400;font-style:normal;color:#ffffff;letter-spacing:0.000px;transform:scaleX(1.0648);transform-origin:0 0;-webkit-text-stroke:0.34px #ffffff">7d</div>
<div class="t" style="left:1034.50px;top:1564.30px;font-size:26.812px;line-height:26.812px;font-weight:400;font-style:normal;color:#ffffff;letter-spacing:-0.125px;-webkit-text-stroke:0.34px #ffffff">15d</div>
<div class="t" style="left:1137.88px;top:1564.30px;font-size:26.812px;line-height:26.812px;font-weight:400;font-style:normal;color:#ffffff;letter-spacing:0.000px;transform:scaleX(1.1190);transform-origin:0 0;-webkit-text-stroke:0.34px #ffffff">30d</div>
<div class="t" style="left:1247.12px;top:1564.30px;font-size:26.812px;line-height:26.812px;font-weight:400;font-style:normal;color:#ffffff;letter-spacing:0.000px;transform:scaleX(1.1310);transform-origin:0 0;-webkit-text-stroke:0.34px #ffffff">60d</div>
<div class="t" style="left:1356.63px;top:1564.30px;font-size:26.812px;line-height:26.812px;font-weight:400;font-style:normal;color:#ffffff;letter-spacing:0.000px;transform:scaleX(1.1202);transform-origin:0 0;-webkit-text-stroke:0.34px #ffffff">90d</div>
<div class="t" style="left:1463.86px;top:1564.30px;font-size:26.812px;line-height:26.812px;font-weight:400;font-style:normal;color:#ffffff;letter-spacing:0.000px;transform:scaleX(1.0714);transform-origin:0 0;-webkit-text-stroke:0.34px #ffffff">180d</div>
<div class="t" style="left:1583.46px;top:1564.30px;font-size:26.812px;line-height:26.812px;font-weight:400;font-style:normal;color:#ffffff;letter-spacing:-0.000px;transform:scaleX(1.1439);transform-origin:0 0;-webkit-text-stroke:0.34px #ffffff">365d</div>
<div class="t" style="left:157.50px;top:1717.69px;font-size:27.536px;line-height:27.536px;font-weight:400;font-style:normal;color:#ffffff;letter-spacing:-0.350px;-webkit-text-stroke:0.34px #ffffff">Refresh</div>
<div class="t" style="left:1547.50px;top:1717.94px;font-size:27.536px;line-height:27.536px;font-weight:400;font-style:normal;color:#ffffff;letter-spacing:-0.318px;-webkit-text-stroke:0.34px #ffffff">Smart Status</div>
<div class="t" style="left:1793.75px;top:1717.94px;font-size:27.536px;line-height:27.536px;font-weight:400;font-style:normal;color:#6b717a;letter-spacing:0.266px;-webkit-text-stroke:0.34px #6b717a">Acknowledge alert</div>
<div class="t" style="left:2148.00px;top:1717.94px;font-size:27.536px;line-height:27.536px;font-weight:400;font-style:normal;color:#6b717a;letter-spacing:0.100px;-webkit-text-stroke:0.34px #6b717a">Enable</div>
<div class="t" style="left:2357.50px;top:1717.94px;font-size:27.536px;line-height:27.536px;font-weight:400;font-style:normal;color:#ffffff;letter-spacing:0.125px;-webkit-text-stroke:0.34px #ffffff">Disable</div>
<div class="t" style="left:2574.75px;top:1717.94px;font-size:27.536px;line-height:27.536px;font-weight:400;font-style:normal;color:#ffffff;letter-spacing:0.600px;-webkit-text-stroke:0.34px #ffffff">Delete</div>
<div class="t" style="left:2781.25px;top:1717.94px;font-size:27.536px;line-height:27.536px;font-weight:400;font-style:normal;color:#ffffff;letter-spacing:0.550px;-webkit-text-stroke:0.34px #ffffff">Modify</div>
<div class="t" style="left:2988.75px;top:1717.94px;font-size:27.536px;line-height:27.536px;font-weight:400;font-style:normal;color:#ffffff;letter-spacing:-0.050px;-webkit-text-stroke:0.34px #ffffff">Search</div>
<div class="t" style="left:3200.25px;top:1717.94px;font-size:27.536px;line-height:27.536px;font-weight:400;font-style:normal;color:#ffffff;letter-spacing:0.188px;-webkit-text-stroke:0.34px #ffffff">Close</div>
<div class="t" style="left:184.30px;top:1079.21px;font-size:21.014px;line-height:21.014px;font-weight:400;font-style:normal;color:#c3c3c3;letter-spacing:1.320px;-webkit-text-stroke:0.26px #c3c3c3">36,000</div>
<div class="t" style="left:184.60px;top:1195.01px;font-size:21.014px;line-height:21.014px;font-weight:400;font-style:normal;color:#c3c3c3;letter-spacing:1.260px;-webkit-text-stroke:0.26px #c3c3c3">24,000</div>
<div class="t" style="left:188.00px;top:1308.91px;font-size:21.014px;line-height:21.014px;font-weight:400;font-style:normal;color:#c3c3c3;letter-spacing:0.580px;-webkit-text-stroke:0.26px #c3c3c3">12,000</div>
<div class="t" style="left:2640.24px;top:1078.91px;font-size:21.014px;line-height:21.014px;font-weight:400;font-style:normal;color:#c3c3c3;letter-spacing:0.000px;transform:scaleX(1.1591);transform-origin:0 0;-webkit-text-stroke:0.26px #c3c3c3">60</div>
<div class="t" style="left:2640.26px;top:1194.21px;font-size:21.014px;line-height:21.014px;font-weight:400;font-style:normal;color:#c3c3c3;letter-spacing:-0.000px;transform:scaleX(1.1409);transform-origin:0 0;-webkit-text-stroke:0.26px #c3c3c3">40</div>
<div class="t" style="left:2640.24px;top:1308.61px;font-size:21.014px;line-height:21.014px;font-weight:400;font-style:normal;color:#c3c3c3;letter-spacing:0.000px;transform:scaleX(1.1591);transform-origin:0 0;-webkit-text-stroke:0.26px #c3c3c3">20</div>
<div class="t" style="left:265.00px;top:1453.21px;font-size:21.014px;line-height:21.014px;font-weight:400;font-style:normal;color:#c3c3c3;letter-spacing:0.300px;-webkit-text-stroke:0.26px #c3c3c3">16:00</div>
<div class="t" style="left:267.00px;top:1481.01px;font-size:21.014px;line-height:21.014px;font-weight:400;font-style:normal;color:#c3c3c3;letter-spacing:0.333px;-webkit-text-stroke:0.26px #c3c3c3">Wed Jul 24</div>
<div class="t" style="left:266.39px;top:1509.11px;font-size:21.014px;line-height:21.014px;font-weight:400;font-style:normal;color:#c3c3c3;letter-spacing:0.000px;transform:scaleX(1.1111);transform-origin:0 0;-webkit-text-stroke:0.26px #c3c3c3">2024</div>
<div class="t" style="left:460.80px;top:1453.21px;font-size:21.014px;line-height:21.014px;font-weight:400;font-style:normal;color:#c3c3c3;letter-spacing:1.425px;-webkit-text-stroke:0.26px #c3c3c3">20:00</div>
<div class="t" style="left:655.80px;top:1453.21px;font-size:21.014px;line-height:21.014px;font-weight:400;font-style:normal;color:#c3c3c3;letter-spacing:1.425px;-webkit-text-stroke:0.26px #c3c3c3">00:00</div>
<div class="t" style="left:656.80px;top:1481.01px;font-size:21.014px;line-height:21.014px;font-weight:400;font-style:normal;color:#c3c3c3;letter-spacing:0.411px;-webkit-text-stroke:0.26px #c3c3c3">Thu Jul 25</div>
<div class="t" style="left:851.00px;top:1453.21px;font-size:21.014px;line-height:21.014px;font-weight:400;font-style:normal;color:#c3c3c3;letter-spacing:1.438px;-webkit-text-stroke:0.26px #c3c3c3">04:00</div>
<div class="t" style="left:1045.50px;top:1453.21px;font-size:21.014px;line-height:21.014px;font-weight:400;font-style:normal;color:#c3c3c3;letter-spacing:1.438px;-webkit-text-stroke:0.26px #c3c3c3">08:00</div>
<div class="t" style="left:1239.30px;top:1453.21px;font-size:21.014px;line-height:21.014px;font-weight:400;font-style:normal;color:#c3c3c3;letter-spacing:0.500px;-webkit-text-stroke:0.26px #c3c3c3">12:00</div>
<div class="t" style="left:1433.50px;top:1453.21px;font-size:21.014px;line-height:21.014px;font-weight:400;font-style:normal;color:#c3c3c3;letter-spacing:0.375px;-webkit-text-stroke:0.26px #c3c3c3">16:00</div>
<div class="t" style="left:1630.25px;top:1453.21px;font-size:21.014px;line-height:21.014px;font-weight:400;font-style:normal;color:#c3c3c3;letter-spacing:1.438px;-webkit-text-stroke:0.26px #c3c3c3">20:00</div>
<div class="t" style="left:1825.25px;top:1453.21px;font-size:21.014px;line-height:21.014px;font-weight:400;font-style:normal;color:#c3c3c3;letter-spacing:1.438px;-webkit-text-stroke:0.26px #c3c3c3">00:00</div>
<div class="t" style="left:1824.25px;top:1481.01px;font-size:21.014px;line-height:21.014px;font-weight:400;font-style:normal;color:#c3c3c3;letter-spacing:0.389px;-webkit-text-stroke:0.26px #c3c3c3">Fri Jul 26</div>
<div class="t" style="left:2020.00px;top:1453.21px;font-size:21.014px;line-height:21.014px;font-weight:400;font-style:normal;color:#c3c3c3;letter-spacing:1.438px;-webkit-text-stroke:0.26px #c3c3c3">04:00</div>
<div class="t" style="left:2214.50px;top:1453.21px;font-size:21.014px;line-height:21.014px;font-weight:400;font-style:normal;color:#c3c3c3;letter-spacing:1.438px;-webkit-text-stroke:0.26px #c3c3c3">08:00</div>
<div class="t" style="left:2408.25px;top:1453.21px;font-size:21.014px;line-height:21.014px;font-weight:400;font-style:normal;color:#c3c3c3;letter-spacing:0.500px;-webkit-text-stroke:0.26px #c3c3c3">12:00</div>
<div class="t" style="left:2763.70px;top:1278.48px;font-size:22.464px;line-height:22.464px;font-weight:400;font-style:normal;color:#c3c3c3;letter-spacing:0.911px;-webkit-text-stroke:0.28px #c3c3c3">latest_eventcount_5m</div>
<div class="t" style="left:2764.70px;top:1302.28px;font-size:22.464px;line-height:22.464px;font-weight:400;font-style:normal;color:#c3c3c3;letter-spacing:0.892px;-webkit-text-stroke:0.28px #c3c3c3">avg_latency_5m</div>
<div class="t" style="left:2763.70px;top:1325.98px;font-size:22.464px;line-height:22.464px;font-weight:400;font-style:normal;color:#c3c3c3;letter-spacing:0.925px;-webkit-text-stroke:0.28px #c3c3c3">lag_event_sec</div>
<div style="position:absolute;left:825px;top:371px;width:199px;height:83px;border:6.5px solid #b5dc47;border-radius:3px;box-sizing:border-box"></div>
<svg style="left:1055px;top:383px" width="130" height="46" viewBox="0 0 130 46"><path d="M6 23 L42 5.5 Q44 5 44 7.5 L42.5 18 L121 20.5 Q124 21 124 23 Q124 25 121 25.5 L42.5 28.5 L44 38.5 Q44 41 42 40.5 Z" fill="#b5dc47"/></svg>
<div class="t" style="left:170px;top:1261px;width:0;height:0;"><div class="t" style="left:0;top:0;font-size:24.5px;line-height:24.5px;color:#c3c3c3;letter-spacing:-0.45px;transform:translate(-50%,-50%) rotate(-90deg)">Events count</div></div>
<div class="t" style="left:2687px;top:1261.5px;width:0;height:0;"><div class="t" style="left:0;top:0;font-size:24.5px;line-height:24.5px;color:#c3c3c3;letter-spacing:-0.65px;transform:translate(-50%,-50%) rotate(90deg)">$splk_dsm_...chart1_axis$</div></div>
</body></html>
